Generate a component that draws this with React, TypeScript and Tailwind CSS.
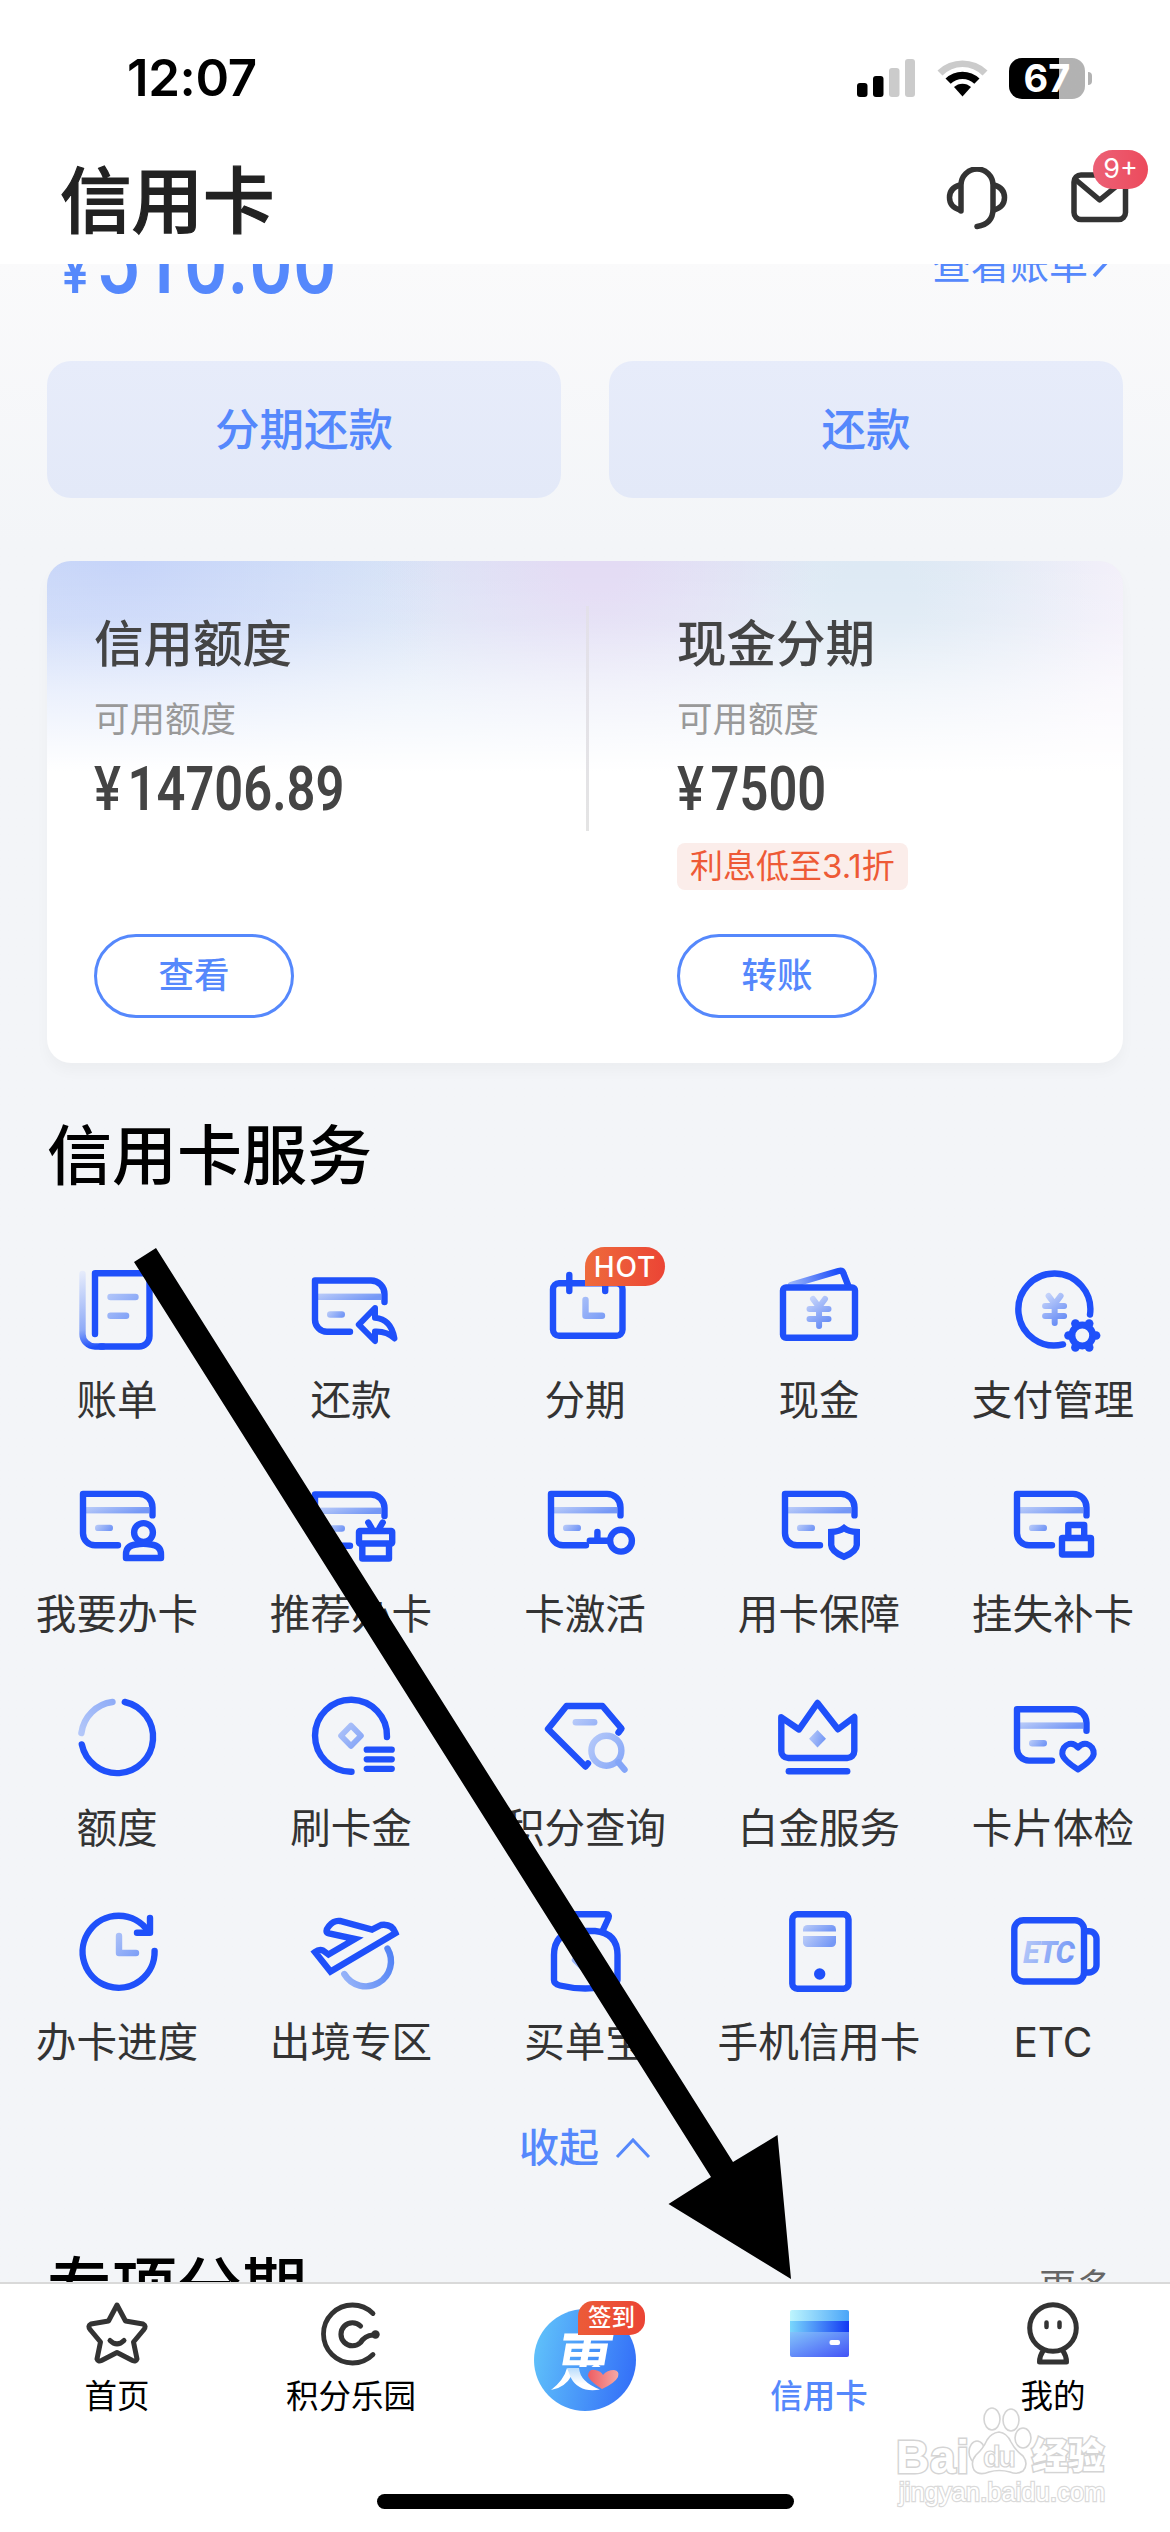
import React from 'react';

const BLUE = '#1f50fa';

type IconProps = { children: React.ReactNode };

function IconBox({ children }: IconProps) {
  return (
    <svg
      width="100"
      height="100"
      viewBox="0 0 100 100"
      fill="none"
      stroke={BLUE}
      strokeWidth="6.4"
      strokeLinecap="round"
      strokeLinejoin="round"
      className="overflow-visible"
    >
      {children}
    </svg>
  );
}

// Shared card outline, the small glyph at bottom right is passed as children
function CardIcon({ dx = 0, dy = 0, children }: { dx?: number; dy?: number; children: React.ReactNode }) {
  return (
    <IconBox>
      <g transform={`translate(${dx} ${dy})`}>
        <rect x="17" y="33.6" width="64" height="6.4" fill="url(#fade)" stroke="none" />
        <rect x="27" y="51.3" width="18" height="6.4" rx="3.2" fill="url(#fade)" stroke="none" />
        <path d="M50 71.8 H27 a12 12 0 0 1 -12 -12 V20.5 H71 a13.5 13.5 0 0 1 13.5 13.5 V42" />
      </g>
      {children}
    </IconBox>
  );
}

function Yen({ x, y }: { x: number; y: number }) {
  return (
    <g transform={`translate(${x} ${y})`} stroke="url(#yenFade)" strokeWidth="6">
      <path d="M-6 -13 L0 -5 L6 -13 M-9.5 -3 H9.5 M-9.5 7 H9.5 M0 -5 L0.1 14" />
    </g>
  );
}

const services = [
  {
    label: '账单',
    icon: (
      <IconBox>
        <path d="M15.5 14 V74 a12.5 12.5 0 0 0 12.5 12.5 H36" stroke="url(#billFade)" />
        <path d="M28 74 V13.2 H77 a5.5 5.5 0 0 1 5.5 5.5 V76 a10.5 10.5 0 0 1 -10.5 10.5 H34" />
        <path d="M43.5 37 H68.5 M43.5 55.8 H59.1" stroke="url(#fadeStroke)" />
      </IconBox>
    ),
  },
  {
    label: '还款',
    icon: (
      <CardIcon dx={-1}>
        <path d="M74 48 L57.8 64.6 L74 81 V71.5 Q86 71 93.5 78.5 Q90 59 74 57.8 Z" strokeWidth="6" />
      </CardIcon>
    ),
  },
  {
    label: '分期',
    hot: true,
    icon: (
      <IconBox>
        <rect x="18" y="23.3" width="69.5" height="52.5" rx="6" />
        <path d="M34.3 15 V31 M70.2 15 V31" />
        <path d="M50.5 40 V55.8 H67" stroke="url(#fadeStroke)" />
      </IconBox>
    ),
  },
  {
    label: '现金',
    icon: (
      <IconBox>
        <path d="M22 25 L69.5 11 Q73.5 10 74.5 13.5 L79 25" stroke="url(#flap)" />
        <rect x="14" y="27.5" width="72" height="50.3" rx="3" />
        <Yen x={50} y={52} />
      </IconBox>
    ),
  },
  {
    label: '支付管理',
    icon: (
      <IconBox>
        <path d="M87 54.5 A36 36 0 1 0 60 84.4" />
        <Yen x={51.6} y={49} />
        <circle cx="79.3" cy="75.5" r="10.4" strokeWidth="7" />
        {/* gear teeth */}
        <g fill={BLUE} stroke="none">
          <circle cx="93.1" cy="75.5" r="4.3" />
          <circle cx="65.5" cy="75.5" r="4.3" />
          <circle cx="86.2" cy="87.4" r="4.3" />
          <circle cx="72.4" cy="87.4" r="4.3" />
          <circle cx="86.2" cy="63.6" r="4.3" />
          <circle cx="72.4" cy="63.6" r="4.3" />
        </g>
      </IconBox>
    ),
  },
  {
    label: '我要办卡',
    icon: (
      <CardIcon dx={1} dy={-0.6}>
        <circle cx="76.5" cy="58.5" r="9.4" />
        <path d="M59 84 V80.5 Q59 71.5 69 70.5 Q76 69 84 70.5 Q94 71.5 94 80.5 V84 Z" />
      </CardIcon>
    ),
  },
  {
    label: '推荐办卡',
    icon: (
      <CardIcon dx={-1}>
        <path d="M67.3 48.5 L70.5 54 M81.7 48.5 L78.5 54" />
        <rect x="58" y="57" width="33.2" height="12.5" rx="1" />
        <path d="M61.3 71 V84.5 H88 V71" />
      </CardIcon>
    ),
  },
  {
    label: '卡激活',
    icon: (
      <CardIcon dx={1} dy={-0.6}>
        <circle cx="86" cy="66.7" r="10.9" />
        <path d="M54.8 66.7 H74 M62.4 58 V65" />
      </CardIcon>
    ),
  },
  {
    label: '用卡保障',
    icon: (
      <CardIcon dx={1} dy={-0.6}>
        <path d="M75 54 Q80 57.8 87.8 58 V71 Q87.5 77.5 75 82.8 Q62.5 77.5 62.2 71 V58 Q70 57.8 75 54 Z" strokeLinejoin="miter" />
      </CardIcon>
    ),
  },
  {
    label: '挂失补卡',
    icon: (
      <CardIcon dx={-1} dy={-0.6}>
        <rect x="59" y="64" width="29" height="16.5" rx="0.5" />
        <path d="M65.3 63 V51 H81.2 V63" />
      </CardIcon>
    ),
  },
  {
    label: '额度',
    icon: (
      <IconBox>
        <path d="M57.8 14 A36 36 0 1 1 14.8 56.4" />
        <path d="M14.4 45 A36 36 0 0 1 45.5 14" stroke="url(#arcFade)" />
      </IconBox>
    ),
  },
  {
    label: '刷卡金',
    icon: (
      <IconBox>
        <path d="M86 49 A36 36 0 1 0 50.5 83.7" />
        <path d="M50 37.5 L60 47.7 L50 58 L40 47.7 Z" stroke="url(#fadeStroke)" strokeWidth="5.6" />
        <path d="M65.7 61.7 H90.8 M65.7 71.3 H90.8 M65.7 80.8 H90.8" strokeWidth="6.2" />
      </IconBox>
    ),
  },
  {
    label: '积分查询',
    icon: (
      <IconBox>
        <path d="M83.5 44.5 L86.5 40.5 L67.5 18 H31.5 L13 41 L50.5 78.5 L53 75.5" />
        <path d="M40.8 34.3 H59.2" stroke="url(#fadeStroke)" />
        <circle cx="71.4" cy="62.7" r="15" stroke="url(#lens)" />
        <path d="M83.5 74.5 L89.5 81.5" stroke="#83a5f8" />
      </IconBox>
    ),
  },
  {
    label: '白金服务',
    icon: (
      <IconBox>
        <path d="M12.3 29.3 L30 41.5 L48.5 15 L69 41.3 L85.3 29 V63 a7 7 0 0 1 -7 7 H19.3 a7 7 0 0 1 -7 -7 Z" />
        <path d="M19.8 83.2 H78.2" />
        <path d="M48.5 42 L57 50.7 L48.5 59.5 L40 50.7 Z" fill="url(#fade)" stroke="none" />
      </IconBox>
    ),
  },
  {
    label: '卡片体检',
    icon: (
      <CardIcon dx={-1} dy={0.8}>
        <path d="M75 59.5 Q71 54.8 66 56 Q59 58.5 59.3 66 Q60 72 75 81.5 Q90 72 90.7 66 Q91 58.5 84 56 Q79 54.8 75 59.5 Z" strokeWidth="6" />
      </CardIcon>
    ),
  },
  {
    label: '办卡进度',
    icon: (
      <IconBox>
        <path d="M87.6 49 A36 36 0 1 1 81 29" />
        <path d="M83 16 V30.7 H70" />
        <path d="M52 34 V51 H69" stroke="url(#fadeStroke)" />
      </IconBox>
    ),
  },
  {
    label: '出境专区',
    icon: (
      <IconBox>
        <path
          d="M94.5 31 Q91 21.5 80 23 L71 27.5 L39 19 Q33 18 28 24 Q23 30 28 31.5 L54 37 L27.5 52.5 L22 48.5 Q18 47 14 50 L29.5 69.5 Z"
          strokeLinejoin="miter"
        />
        <path d="M43.3 72 A24 24 0 0 0 86.5 46.5" stroke="url(#fadeDark)" />
      </IconBox>
    ),
  },
  {
    label: '买单宝',
    icon: (
      <IconBox>
        <path d="M32 28 L26.5 16 Q25 12.2 29 12.2 H71 Q75 12.2 73.5 16 L68 28" />
        <path d="M42 29 H60 Q82.5 31 82.5 53 V78 Q82 82 76 83.5 Q50 89.5 25 83.5 Q19 82 19 78 V53 Q19 31 42 29 Z" />
        <path d="M50.5 48 L61 58 L50.5 68 L40 58 Z" stroke="url(#fadeStroke)" />
      </IconBox>
    ),
  },
  {
    label: '手机信用卡',
    icon: (
      <IconBox>
        <rect x="23.3" y="12.3" width="56.2" height="74.5" rx="5" />
        <path d="M34 29.5 v-2 a4.5 4.5 0 0 1 4.5 -4.5 h24 a4.5 4.5 0 0 1 4.5 4.5 v2 z" fill="url(#fade)" stroke="none" />
        <path d="M34 34 h33 v6.5 a4.5 4.5 0 0 1 -4.5 4.5 h-24 a4.5 4.5 0 0 1 -4.5 -4.5 z" fill="url(#fade)" stroke="none" />
        <circle cx="50.7" cy="72" r="5.7" fill={BLUE} stroke="none" />
      </IconBox>
    ),
  },
  {
    label: 'ETC',
    icon: (
      <IconBox>
        <rect x="11.3" y="18.3" width="69.7" height="61.2" rx="9" />
        <path d="M84 29.3 H86 a7.5 7.5 0 0 1 7.5 7.5 V63 a7.5 7.5 0 0 1 -7.5 7.5 H84" />
        <text
          x="20"
          y="60.5"
          fontSize="30.5"
          fontWeight="800"
          fontStyle="italic"
          fill="url(#fade)"
          stroke="none"
          textLength="52"
          className="font-['Roboto',sans-serif]"
        >
          ETC
        </text>
      </IconBox>
    ),
  },
];

function GradientDefs() {
  return (
    <svg width="0" height="0" className="absolute">
      <defs>
        <linearGradient id="fade" x1="0" y1="0" x2="1" y2="0.3">
          <stop offset="0" stopColor="#bccdf8" />
          <stop offset="1" stopColor="#7598f6" />
        </linearGradient>
        <linearGradient id="fadeStroke" gradientUnits="userSpaceOnUse" x1="38" y1="30" x2="72" y2="64">
          <stop offset="0" stopColor="#b9cbf9" />
          <stop offset="1" stopColor="#7196f6" />
        </linearGradient>
        <linearGradient id="yenFade" gradientUnits="userSpaceOnUse" x1="-10" y1="-12" x2="8" y2="14">
          <stop offset="0" stopColor="#c3d2fa" />
          <stop offset="1" stopColor="#6389f5" />
        </linearGradient>
        <linearGradient id="arcFade" gradientUnits="userSpaceOnUse" x1="12" y1="44" x2="46" y2="12">
          <stop offset="0" stopColor="#b3c7f9" />
          <stop offset="1" stopColor="#8facf7" />
        </linearGradient>
        <linearGradient id="lens" gradientUnits="userSpaceOnUse" x1="54" y1="50" x2="90" y2="74">
          <stop offset="0" stopColor="#b5c9f9" />
          <stop offset="1" stopColor="#86a7f8" />
        </linearGradient>
        <linearGradient id="fadeDark" gradientUnits="userSpaceOnUse" x1="40" y1="70" x2="90" y2="50">
          <stop offset="0" stopColor="#96b3f9" />
          <stop offset="1" stopColor="#5283f5" />
        </linearGradient>
        <linearGradient id="billFade" gradientUnits="userSpaceOnUse" x1="15" y1="10" x2="32" y2="86">
          <stop offset="0" stopColor="#e8edfb" />
          <stop offset="0.75" stopColor="#8fabf7" />
          <stop offset="1" stopColor="#1f50fa" />
        </linearGradient>
        <linearGradient id="flap" gradientUnits="userSpaceOnUse" x1="22" y1="25" x2="68" y2="14">
          <stop offset="0" stopColor="#9db6f8" />
          <stop offset="1" stopColor="#1f50fa" />
        </linearGradient>
      </defs>
    </svg>
  );
}

function StatusBar() {
  return (
    <div className="flex h-[128px] items-start justify-between pl-[127px] pr-[78px] pt-[48px] text-black">
      <span className="text-[51px] font-semibold leading-[60px] tracking-[-0.4px]">12:07</span>
      <div className="flex h-[60px] items-center">
        <svg width="58" height="38" viewBox="0 0 58 38" className="mr-[22px]">
          <rect x="0" y="24" width="10.5" height="14" rx="3" />
          <rect x="16" y="17" width="10.5" height="21" rx="3" />
          <rect x="32" y="9" width="10.5" height="29" rx="3" fill="#cbcbcb" />
          <rect x="48" y="0" width="10" height="38" rx="3" fill="#cbcbcb" />
        </svg>
        <svg width="51" height="38" viewBox="0 0 51 38" className="mr-[21px]">
          <path d="M0.5 11.5 A36 36 0 0 1 50.5 11.5 L45.5 16.5 A28 28 0 0 0 5.5 16.5 Z" fill="#cbcbcb" />
          <path d="M8.5 19.5 A24.5 24.5 0 0 1 42.5 19.5 L37.3 24.7 A17 17 0 0 0 13.7 24.7 Z" />
          <path d="M17 28 A12.5 12.5 0 0 1 34 28 L25.5 37.5 Z" />
        </svg>
        <div className="flex h-[41px] w-[76px] items-center justify-center overflow-hidden rounded-[13px] bg-linear-to-r from-black from-66% to-[#b2b2b2] to-66% text-[38px] font-bold text-white">
          67
        </div>
        <div className="ml-[3px] h-[13px] w-[4px] rounded-r-full bg-[#b2b2b2]" />
      </div>
    </div>
  );
}

function PageHeader() {
  return (
    <div className="flex h-[136px] items-start justify-between bg-white pl-[60px] pr-[41px]">
      <h1 className="pt-[28px] text-[71.5px] font-medium leading-[90px] text-[#222] [-webkit-text-stroke:1.2px_#222]">信用卡</h1>
      <div className="flex pt-[39px]">
        <svg width="62" height="64" viewBox="0 0 62 64" fill="none" stroke="#333" strokeWidth="5.5" strokeLinecap="round" strokeLinejoin="round">
          <path d="M15 44 V18 A15.5 15.5 0 0 1 47 18 V42 Q47 57 31 59.5" />
          <path d="M14 43 Q3.5 40 3.5 30.5 Q3.5 21 14 18 M48 18 Q58.5 21 58.5 30.5 Q58.5 40 48 43" />
        </svg>
        <div className="relative ml-[63px] mt-[5px]">
          <svg width="58" height="52" viewBox="0 0 58 52" fill="none" stroke="#333" strokeWidth="5.5" strokeLinejoin="round">
            <rect x="3" y="3" width="51.5" height="44.5" rx="7" />
            <path d="M5 8 L28.7 28 L53 8" />
          </svg>
          <span className="absolute -top-[22px] left-[22px] flex h-[39px] w-[55px] items-center justify-center rounded-full bg-linear-to-r from-[#ec6076] to-[#ec4a5c] text-[27px] text-white">
            9+
          </span>
        </div>
      </div>
    </div>
  );
}

function BillSummary() {
  return (
    <div className="px-[47px]">
      <div className="flex h-[97px] justify-between overflow-hidden pl-[15px] pr-[14px] text-[#5588fc]">
        <div className="-mt-[67px] flex h-[110px] origin-left scale-x-[0.83] items-baseline font-['Roboto',sans-serif] font-medium leading-[130px]">
          <span className="text-[60px]">¥</span>
          <span className="ml-[9px] text-[93px]">510.00</span>
        </div>
        <span className="-mt-[25px] flex h-[52px] items-center text-[39px]">
          查看账单
          <svg width="21" height="30" viewBox="0 0 21 30" fill="none" stroke="#5588fc" strokeWidth="3.5">
            <path d="M6 1 L18 13 L6 26" />
          </svg>
        </span>
      </div>
      <div className="grid grid-cols-2 gap-[48px]">
        {['分期还款', '还款'].map((text) => (
          <button
            key={text}
            className="h-[137px] rounded-[24px] bg-linear-to-b from-[#e7ecfa] to-[#e3e9f8] pt-[2px] text-[44.5px] font-medium text-[#5588fc]"
          >
            {text}
          </button>
        ))}
      </div>
    </div>
  );
}

type QuotaProps = { title: string; amount: string; tag?: string; action: string };

function Quota({ title, amount, tag, action }: QuotaProps) {
  return (
    <div className="flex h-full flex-col items-start">
      <h2 className="pt-px text-[49.5px] font-medium leading-[60px] text-[#444]">{title}</h2>
      <p className="mt-[26px] text-[35.5px] leading-[40px] text-[#999]">可用额度</p>
      <p className="mt-[19px] flex origin-left scale-x-[0.83] items-baseline font-['Roboto',sans-serif] text-[61px] font-semibold leading-[60px] text-[#444]">
        <span className="font-medium">¥</span>
        <span className="ml-[8px]">{amount}</span>
      </p>
      {tag && (
        <span className="mt-[24px] h-[47px] rounded-[8px] bg-[#fbedea] px-[13px] text-[33px] leading-[47px] text-[#ee5a36]">{tag}</span>
      )}
      <button className="mt-auto h-[84px] w-[200px] rounded-full border-3 border-[#5588fc] text-[35.5px] font-medium text-[#5588fc]">
        {action}
      </button>
    </div>
  );
}

function QuotaCard() {
  return (
    <div className="mx-[47px] mt-[63px] flex h-[502px] rounded-[24px] bg-white bg-[linear-gradient(to_bottom,transparent_0%,rgba(255,255,255,0.15)_12%,rgba(255,255,255,0.6)_26%,#fff_42%),radial-gradient(circle_at_7%_0%,#c6d4f9_0px,transparent_320px),radial-gradient(circle_at_51%_0%,#e3dbf4_30px,transparent_220px),radial-gradient(circle_at_77%_8%,#dde9f4_40px,transparent_260px),linear-gradient(to_right,#d4e1f8_0%,#dde8f6_50%,#f4f0fa_97%)] pb-[45px] pl-[47px] pt-[52px] shadow-[0_8px_14px_rgba(0,0,0,0.03)]">
      <div className="w-[492px]">
        <Quota title="信用额度" amount="14706.89" action="查看" />
      </div>
      <div className="-mt-[7px] h-[225px] w-[3px] bg-linear-to-b from-[#e3e0ea] to-[#e4e4e4]" />
      <div className="ml-[88px]">
        <Quota title="现金分期" amount="7500" tag="利息低至3.1折" action="转账" />
      </div>
    </div>
  );
}

function Services() {
  return (
    <div>
      <h2 className="ml-[47px] mt-[60px] text-[65px] font-medium leading-[66px] text-black">信用卡服务</h2>
      <div className="mt-[71px] grid grid-cols-5">
        {services.map((s) => (
          <div key={s.label} className="flex h-[214px] flex-col items-center">
            <div className="relative h-[100px] w-[100px]">
              {s.icon}
              {s.hot && (
                <span className="absolute -top-[13px] left-[50px] flex h-[39px] w-[80px] items-center justify-center rounded-full rounded-bl-none bg-linear-to-r from-[#ee6a3c] to-[#eb4435] text-[28px] font-medium tracking-[1px] text-white">
                  HOT
                </span>
              )}
            </div>
            <span className="mt-[16px] whitespace-nowrap text-[40.6px] leading-[50px] text-[#333]">{s.label}</span>
          </div>
        ))}
      </div>
      <div className="mt-[7px] flex h-[50px] items-center justify-center text-[40px] font-medium text-[#5588fc]">
        收起
        <svg width="36" height="22" viewBox="0 0 36 22" fill="none" stroke="#5588fc" strokeWidth="3" className="ml-[16px]">
          <path d="M2 20 L18 3 L34 20" />
        </svg>
      </div>
      <div className="mt-[82px] flex items-center justify-between pl-[47px] pr-[57px]">
        <h2 className="text-[65px] font-medium leading-[66px] text-black">专项分期</h2>
        <span className="text-[37px] leading-[66px] text-[#666]">更多</span>
      </div>
    </div>
  );
}

function HuiLogo() {
  return (
    <svg width="102" height="102" viewBox="0 0 102 102">
      <defs>
        <linearGradient id="hui" x1="0" y1="0.4" x2="1" y2="0.6">
          <stop offset="0" stopColor="#5fc0fa" />
          <stop offset="1" stopColor="#3470f8" />
        </linearGradient>
        <linearGradient id="ribbon" x1="0" y1="0" x2="0" y2="1">
          <stop offset="0" stopColor="#b9dcfc" />
          <stop offset="0.7" stopColor="#fff" />
        </linearGradient>
        <linearGradient id="heart" x1="0" y1="0" x2="1" y2="0">
          <stop offset="0" stopColor="#ee5d62" />
          <stop offset="1" stopColor="#f6a9a6" />
        </linearGradient>
        <clipPath id="huiTop">
          <rect x="0" y="0" width="102" height="58" />
        </clipPath>
      </defs>
      <circle cx="51" cy="51" r="51" fill="url(#hui)" />
      <g clipPath="url(#huiTop)">
        <text x="31" y="64.5" fontSize="57" fontWeight="700" fill="#fff" transform="skewX(-10) scale(1 1.28)" className="font-['Noto_Sans_CJK_SC',sans-serif]">
          惠
        </text>
      </g>
      <path d="M33 59 Q30 71 17 81 Q31 79 38 66 Z" fill="#fff" />
      <path d="M33 59 H45 Q46 73 66 80.500 Q45 84 37 69 Z" fill="url(#ribbon)" />
      <path d="M68 80 Q54 71 54 66 Q55 60 61 61 Q67 62 69 66 Q73 61 80 61 Q86 62 84 68 Q81 74 68 80 Z" fill="url(#heart)" />
    </svg>
  );
}

const tabs = [
  {
    label: '首页',
    icon: (
      <svg width="70" height="70" viewBox="0 0 70 70" fill="none" stroke="#333" strokeWidth="5" strokeLinejoin="round" strokeLinecap="round">
        <path d="M35 7 L43.5 23 L61 26 Q65 28 61.5 32 L51.5 44 L55 61 Q54 64 50.5 62.5 L35 54.5 L19.5 62.5 Q16 64 15 61 L18.5 44 L8.5 32 Q5 28 9 26 L26.5 23 Z" />
        <path d="M28 42.5 Q35 49.5 42 42.5" />
      </svg>
    ),
  },
  {
    label: '积分乐园',
    icon: (
      <svg width="70" height="70" viewBox="0 0 70 70" fill="none" stroke="#333" strokeWidth="4.8" strokeLinecap="round">
        <path d="M57 15.5 A29 29 0 1 0 57 56.5" />
        <path d="M44.5 28 A11.5 11.5 0 1 0 44.5 44.5 Q49 37.5 57 37" strokeWidth="5.2" />
        <circle cx="59.5" cy="36.5" r="4.2" fill="#333" stroke="none" />
      </svg>
    ),
  },
  { label: '', icon: <HuiLogo /> },
  {
    label: '信用卡',
    active: true,
    icon: (
      <svg width="70" height="70" viewBox="0 0 70 70">
        <defs>
          <linearGradient id="c1" x1="0" y1="0" x2="1" y2="0">
            <stop offset="0" stopColor="#bdf5fd" />
            <stop offset="1" stopColor="#4aa5f8" />
          </linearGradient>
          <linearGradient id="c2" x1="0" y1="0" x2="1" y2="0">
            <stop offset="0" stopColor="#79d7fc" />
            <stop offset="1" stopColor="#1238f4" />
          </linearGradient>
          <linearGradient id="c3" x1="0" y1="0" x2="1" y2="1">
            <stop offset="0" stopColor="#83c4fb" />
            <stop offset="1" stopColor="#4353f6" />
          </linearGradient>
        </defs>
        <path d="M6 24 V14 q0 -2 2 -2 H63 q2 0 2 2 V24 Z" fill="url(#c1)" />
        <rect x="6" y="23" width="59" height="12" fill="url(#c2)" />
        <path d="M6 34 H65 V57 q0 2 -2 2 H8 q-2 0 -2 -2 Z" fill="url(#c3)" />
        <rect x="45.5" y="42" width="10.5" height="5" rx="2" fill="#fff" />
      </svg>
    ),
  },
  {
    label: '我的',
    icon: (
      <svg width="70" height="70" viewBox="0 0 70 70" fill="none" stroke="#333" strokeWidth="5" strokeLinejoin="round" strokeLinecap="round">
        <circle cx="35" cy="30" r="23.3" />
        <path d="M28.5 24.5 V29 M41.5 24.5 V29" strokeWidth="4.5" />
        <path d="M25 53 Q21.5 58 21.5 64 H48.5 Q48.5 58 45 53" />
      </svg>
    ),
  },
];

function TabBar() {
  return (
    <div className="h-[250px] border-t-2 border-[#d9d9d9] bg-white">
      <div className="grid h-[136px] grid-cols-5">
        {tabs.map((tab, i) =>
          tab.label ? (
            <div key={i} className="flex flex-col items-center pt-[14px]">
              {tab.icon}
              <span
                className={`mt-[9px] text-[32.5px] leading-[40px] ${tab.active ? 'font-medium text-[#5588fc]' : 'text-black'}`}
              >
                {tab.label}
              </span>
            </div>
          ) : (
            <div key={i} className="relative flex justify-center pt-[25px]">
              {tab.icon}
              <span className="absolute left-[110px] top-[17px] flex h-[34px] w-[67px] items-center justify-center rounded-[15px] rounded-bl-none bg-linear-to-r from-[#ec5b38] to-[#eb4435] text-[23.5px] font-medium text-white">
                签到
              </span>
            </div>
          )
        )}
      </div>
      <div className="mx-auto mt-[74px] h-[15px] w-[417px] rounded-full bg-black" />
    </div>
  );
}

function Watermark() {
  return (
    <svg width="220" height="110" viewBox="0 0 220 110" className="absolute left-[891px] top-[2402px]" fill="#fff" stroke="#d4d4d4" strokeWidth="1.6">
      <g strokeWidth="3" paintOrder="stroke">
        <text x="5" y="71" fontSize="46" fontWeight="700" textLength="73" className="font-['Liberation_Sans',sans-serif]">
          Bai
        </text>
        <text x="141" y="67" fontSize="36" fontWeight="900" textLength="72" className="font-['Noto_Sans_CJK_SC',sans-serif]">
          经验
        </text>
      </g>
      <ellipse cx="86" cy="50" rx="8" ry="11" />
      <ellipse cx="101" cy="17" rx="8" ry="11" />
      <ellipse cx="120" cy="18" rx="8" ry="11" />
      <ellipse cx="132" cy="36" rx="8" ry="10" />
      <path d="M108 30 Q116 31 120 40 Q124 48 132 54 Q138 62 132 69 Q126 73 119 70 Q108 67 98 70 Q88 74 83 68 Q79 60 85 53 Q92 47 96 38 Q100 31 108 30 Z" />
      <text x="92" y="65" fontSize="29" fontWeight="700" textLength="33" strokeWidth="1.2" className="font-['Liberation_Sans',sans-serif]">
        du
      </text>
      <text x="8" y="99" fontSize="25" textLength="206" stroke="#dadada" strokeWidth="2.4" paintOrder="stroke" className="font-['Liberation_Sans',sans-serif]">
        jingyan.baidu.com
      </text>
    </svg>
  );
}

export default function App() {
  return (
    <div className="relative flex h-[2532px] w-[1170px] flex-col overflow-hidden bg-white font-['Inter','Noto_Sans_CJK_SC',sans-serif]">
      <GradientDefs />
      <StatusBar />
      <PageHeader />
      <div className="h-[2018px] overflow-hidden bg-linear-to-b from-[#fafafb] to-[#f3f5f8] to-[280px]">
        <BillSummary />
        <QuotaCard />
        <Services />
      </div>
      <TabBar />

      {/* Pointer to the credit card tab */}
      <svg width="1170" height="2532" viewBox="0 0 1170 2532" className="pointer-events-none absolute left-0 top-0">
        <polygon points="156,1248 134,1262 711,2177 668.5,2204 791,2279 777.5,2135 733,2162" />
      </svg>
      <Watermark />
    </div>
  );
}
